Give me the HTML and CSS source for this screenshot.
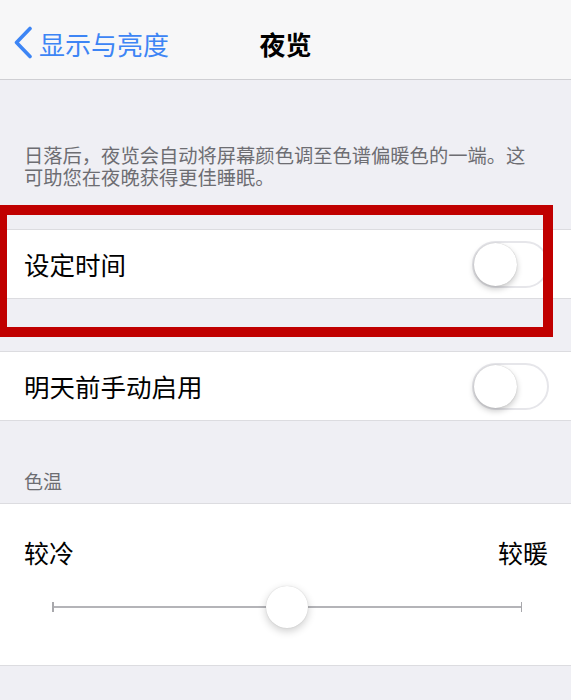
FILE: index.html
```html
<!DOCTYPE html>
<html lang="zh-CN">

<head>
    <meta charset="UTF-8">
    <meta name="viewport" content="width=device-width, initial-scale=1.0">
    <title>夜览</title>

    <link rel="stylesheet" href="styles.css">
</head>

<body>
    <div class="screen">
        <!-- 导航栏 -->
        <div class="navBar">
            <div class="backLink">
                <svg class="chevron" width="20" height="33" viewBox="0 0 20 33">
                    <polyline points="17,2.5 3.5,16.5 17,30.5" fill="none" stroke="#3d85f5" stroke-width="3.6" stroke-linecap="round" stroke-linejoin="round"/>
                </svg>
                <span>显示与亮度</span>
            </div>
            <div class="navTitle">夜览</div>
            <div></div>
        </div>

        <p class="groupNote">日落后，夜览会自动将屏幕颜色调至色谱偏暖色的一端。这<br>可助您在夜晚获得更佳睡眠。</p>

        <div class="group">
            <div class="row">
                <span class="rowLabel">设定时间</span>
                <div class="switch"><div class="knob"></div></div>
            </div>
        </div>

        <div class="group second">
            <div class="row">
                <span class="rowLabel">明天前手动启用</span>
                <div class="switch"><div class="knob"></div></div>
            </div>
        </div>

        <div class="groupHeader">色温</div>

        <div class="group sliderGroup">
            <div class="sliderLabels">
                <span>较冷</span>
                <span>较暖</span>
            </div>
            <div class="slider">
                <div class="track"></div>
                <div class="thumb" style="left: 50%;"></div>
            </div>
        </div>

        <!-- 标注红框 -->
        <div class="markBox"></div>
    </div>
</body>

</html>
```

FILE: styles.css
```css
* {
    box-sizing: border-box;
}

body {
    margin: 0;
    font-family: "Noto Sans CJK SC", "Noto Sans", sans-serif;
    background-color: #efeff4;
}

.screen {
    position: relative;
    width: 571px;
    height: 700px;
    overflow: hidden;
    background-color: #efeff4;
}

/* 导航栏 */
.navBar {
    height: 80px;
    padding-top: 9px;
    background-color: #f7f7f8;
    border-bottom: 1px solid #cfcfd3;
    display: grid;
    grid-template-columns: 1fr auto 1fr;
    align-items: center;
}

.backLink {
    display: flex;
    align-items: center;
    gap: 6px;
    padding-left: 13px;
    color: #3d85f5;
    font-size: 26px;
    line-height: 30px;
}

.chevron {
    display: block;
    margin-top: -3px;
}

.navTitle {
    font-size: 26px;
    line-height: 30px;
    font-weight: 700;
    color: #000;
}

.groupNote {
    margin: 0;
    padding: 64px 24px 0;
    height: 149px;
    font-size: 19.3px;
    line-height: 22px;
    color: #6d6d72;
    white-space: nowrap;
}

.group {
    background-color: #fff;
    border-top: 1px solid #dcdce0;
    border-bottom: 1px solid #dcdce0;
}

.group.second {
    margin-top: 52px;
}

.row {
    height: 68px;
    padding: 0 22px 0 24px;
    display: flex;
    align-items: center;
    justify-content: space-between;
}

.rowLabel {
    font-size: 25.5px;
    line-height: 30px;
    color: #000;
}

/* 开关 (关闭状态) */
.switch {
    width: 77px;
    height: 47px;
    border: 2px solid #e6e6ea;
    border-radius: 24px;
    background-color: #fff;
    padding: 0;
    position: relative;
}

.knob {
    width: 43px;
    height: 43px;
    border-radius: 50%;
    background-color: #fff;
    box-shadow: 0 3px 6px rgba(0, 0, 0, 0.22), 0 0 1px rgba(0, 0, 0, 0.25);
}

.groupHeader {
    padding: 49px 24px 11px;
    font-size: 19px;
    line-height: 22px;
    color: #6d6d72;
}

.sliderGroup {
    padding: 33px 23px 37px 24px;
}

.sliderLabels {
    display: flex;
    justify-content: space-between;
    font-size: 25px;
    line-height: 30px;
    color: #000;
}

.slider {
    position: relative;
    height: 42px;
    margin: 19px 26px 0 28px;
}

.track {
    position: absolute;
    left: 0;
    right: 0;
    top: 20px;
    height: 2px;
    background-color: #b4b4b8;
}

.track::before,
.track::after {
    content: "";
    position: absolute;
    top: -4px;
    width: 1.5px;
    height: 10px;
    background-color: #a8a8ac;
}

.track::before {
    left: 0;
}

.track::after {
    right: 0;
}

.thumb {
    position: absolute;
    top: 0;
    width: 42px;
    height: 42px;
    margin-left: -21px;
    border-radius: 50%;
    background-color: #fff;
    box-shadow: 0 3px 8px rgba(0, 0, 0, 0.2), 0 0 1px rgba(0, 0, 0, 0.2);
}

/* 红色标注框 */
.markBox {
    position: absolute;
    left: -3px;
    top: 205px;
    width: 556px;
    height: 132px;
    border: 10px solid #c00000;
}
```
